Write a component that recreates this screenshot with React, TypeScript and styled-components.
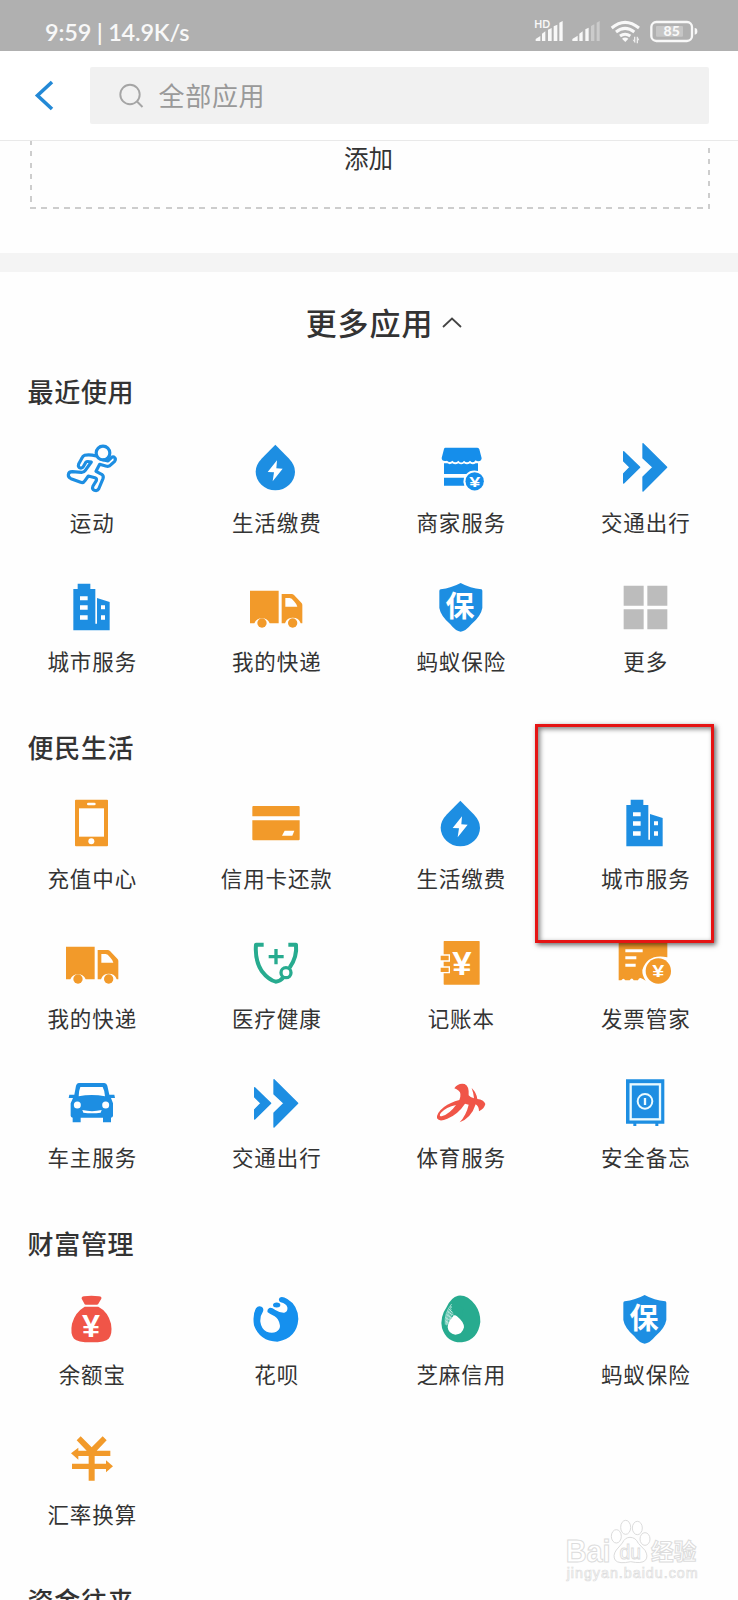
import React from "react";
import styled, { createGlobalStyle } from "styled-components";

const BLUE = "#1d8ee2";
const ORANGE = "#f29a2a";
const GREEN = "#27ab8f";
const RED = "#f05548";
const CJK = '"Noto Sans CJK SC", "Noto Sans", sans-serif';

const GlobalStyle = createGlobalStyle`
  * { box-sizing: border-box; }
  html, body { margin: 0; padding: 0; background: #fefefe; }
  body { font-family: ${CJK}; color: #333; overflow: hidden; }
`;

const Screen = styled.div`
  position: relative;
  width: 738px;
  height: 1600px;
  overflow: hidden;
  background: #fefefe;
`;

const StatusBar = styled.div`
  height: 51px;
  padding: 13px 36px 0 45px;
  background: #b0b0b0;
  display: flex;
  justify-content: space-between;
  align-items: center;
`;

const Clock = styled.span`
  font-family: Lato, "Noto Sans", sans-serif;
  font-weight: 600;
  font-size: 23.5px;
  line-height: 36px;
  letter-spacing: -0.2px;
  color: #f8f8f8;
  white-space: pre;
`;

const Header = styled.header`
  height: 90px;
  border-bottom: 1px solid #e9e9e9;
  background: #fff;
  display: flex;
  align-items: center;
  padding: 0 29px 0 34px;
`;

const BackButton = styled.button`
  width: 56px;
  height: 56px;
  padding: 0;
  border: 0;
  background: none;
  text-align: left;
  svg { display: block; }
`;

const SearchBox = styled.div`
  flex: 1;
  height: 57px;
  border-radius: 2px;
  background: #f1f1f1;
  display: flex;
  align-items: center;
  padding-left: 29px;
  gap: 14px;
`;

const Placeholder = styled.span`
  margin: -2px 0 0 -0.5px;
  font-size: 26px;
  line-height: 36px;
  letter-spacing: 0.7px;
  color: #999;
`;

const AddArea = styled.div`
  height: 112px;
  padding: 0 28.5px 0 29.5px;
`;

const AddBox = styled.div`
  height: 68px;
  display: flex;
  justify-content: center;
  padding-right: 2px;
  font-size: 24.5px;
  line-height: 34px;
  background:
    repeating-linear-gradient(90deg, #cdcdcd 0 6px, transparent 6px 11.3px) left bottom / 100% 2px no-repeat,
    repeating-linear-gradient(180deg, #cdcdcd 0 5px, transparent 5px 11.3px) left -1px / 2px 100% no-repeat,
    repeating-linear-gradient(0deg, #cdcdcd 0 5px, transparent 5px 11.3px) right top / 2px 100% no-repeat;
`;

const Divider = styled.div`
  height: 19px;
  background: #f4f4f4;
`;

const MoreTitle = styled.h1`
  margin: 0;
  height: 100px;
  padding: 26px 0 0 30px;
  display: flex;
  justify-content: center;
  align-items: flex-start;
  gap: 9px;
  font-size: 31px;
  line-height: 48px;
  font-weight: 500;
  letter-spacing: 0.9px;
  svg { display: block; margin-top: 18px; }
`;

const Section = styled.section`
  padding-bottom: 22.2px;
`;

const SectionTitle = styled.h2`
  margin: 0 0 16px;
  padding-left: 27.5px;
  height: 39px;
  line-height: 38px;
  font-size: 26px;
  font-weight: 500;
  letter-spacing: 0.7px;
`;

const Grid = styled.div`
  display: grid;
  grid-template-columns: repeat(4, 1fr);
  grid-auto-rows: 139.6px;
`;

const Cell = styled.div`
  display: flex;
  flex-direction: column;
  align-items: center;
  padding-top: 10px;
`;

const Glyph = styled.svg`
  display: block;
  width: 60px;
  height: 60px;
  margin-right: 1px;
`;

const Label = styled.span`
  margin: 8.6px 0 0;
  font-size: 21.5px;
  line-height: 32px;
  letter-spacing: 0.9px;
  white-space: nowrap;
`;

const Highlight = styled.div`
  position: absolute;
  left: 535px;
  top: 724px;
  width: 179px;
  height: 219px;
  border: 3px solid #e51414;
  box-shadow: 2px 2px 5px rgba(0, 0, 0, 0.6), inset 2px 2px 5px rgba(0, 0, 0, 0.5);
`;

const Watermark = styled.svg`
  position: absolute;
  left: 559px;
  top: 1513px;
  width: 147px;
  height: 77px;
`;

const Yen = ({ x, y, size, width }: { x: number; y: number; size: number; width: number }) => (
  <text
    x={x - width / 2}
    y={y}
    fill="#fff"
    stroke="none"
    fontFamily="Liberation Sans, sans-serif"
    fontWeight="700"
    fontSize={size}
    textLength={width}
    lengthAdjust="spacingAndGlyphs"
  >
    ¥
  </text>
);

const Run = () => (
  <Glyph viewBox="187 441 180 180" fill="none" stroke={BLUE} strokeWidth="9.5" strokeLinejoin="round" strokeLinecap="round">
    <circle cx="310" cy="489" r="20.5" />
    <path d="M290 498 Q268 492 255 496 Q249 498 247 504 L237 522 Q234 532 242 534 Q249 535 252 528 L259 516 Q262 513 275 516 L257 541 Q253 547 246 547 L218 545 Q207 545 206 554 Q205 562 214 566 L243 577 Q251 580 256 572 L266 558 L286 563 Q292 565 290 572 L280 588 Q276 598 284 601 Q293 604 297 597 L310 566 Q313 558 306 553 L289 544 L300 523 L318 528 Q329 531 334 524 L345 514 Q350 505 343 501 Q337 499 333 505 L325 513 L312 510" />
  </Glyph>
);

const Utility = () => (
  <Glyph viewBox="740 441 180 180">
    <path fill={BLUE} d="M828 464 L868 505 Q887 525 887 545 A59 56 0 0 1 769 545 Q769 525 788 505Z" />
    <path fill="#fff" d="M833 511 L805 546 L824 547 L820 574 L850 536 L831 535Z" />
  </Glyph>
);

const Shop = () => (
  <Glyph viewBox="187 441 180 180" fill="#158eeb">
    <path d="M230 473 H326 Q331 473 332 478 L339 505 Q338 514 329 514 Q324 514 321 511 Q313 522 304 512 Q295 522 286 512 Q278 523 269 512 Q260 522 251 512 Q243 520 235 512 Q219 515 219 504 L226 477 Q227 473 230 473Z" />
    <path d="M226 520 H236 Q243 525 251 520 Q260 526 269 520 Q278 526 286 520 Q295 526 304 520 Q313 526 321 520 H328 V543 Q306 538 293 552 H226Z M226 563 H286 Q282 575 287 587 H226Z" />
    <circle cx="318" cy="574" r="27.5" />
    <Yen x={318} y={590} size={46} width={33} />
  </Glyph>
);

const Travel = () => (
  <Glyph viewBox="740 441 180 180" fill={BLUE} stroke={BLUE} strokeWidth="4" strokeLinejoin="round">
    <path d="M766 485 L814 532 L766 579 V551 L785 532 L766 513Z M824 461 L895 532 L824 603 V561 L854 532 L824 504Z" />
  </Glyph>
);

const City = () => (
  <Glyph viewBox="187 49 180 180">
    <path fill={BLUE} fillRule="evenodd" d="M221 85 H234 V69 H272 V85 H287 V189 H292 V112 L330 124 V209 H221Z M241 107 V119 H264 V107Z M241 134 V147 H264 V134Z M241 164 V177 H264 V164Z M304 134 V146 H316 V134Z M304 164 V177 H316 V164Z" />
  </Glyph>
);

const Truck = () => (
  <Glyph viewBox="740 50 180 180" fill={ORANGE}>
    <path d="M752 91 H838 V189 H811 A25 25 0 0 0 765 189 H752Z" />
    <path fillRule="evenodd" d="M847 101 H877 Q881 101 884 104 L906 127 Q909 130 909 134 V189 H904 A25 25 0 0 0 857 189 H847Z M858 113 V139 H894 Q891 130 884 123 Q877 113 871 113Z" />
    <circle cx="788" cy="188" r="14" />
    <circle cx="880" cy="188" r="14" />
  </Glyph>
);

const Shield = () => (
  <Glyph viewBox="187 50 180 180">
    <path fill={BLUE} d="M276 68 Q305 84 338 87 Q341 88 341 92 V143 Q337 167 308 192 Q290 214 276 214 Q262 214 245 192 Q216 167 212 143 V92 Q212 88 216 87 Q248 83 276 68Z" />
    <text x="274" y="169" fill="#fff" textAnchor="middle" fontFamily={CJK} fontWeight="700" fontSize="87">保</text>
  </Glyph>
);

const More = () => (
  <Glyph viewBox="740 50 180 180" fill="#bcbcbc">
    <path d="M766 76 H826 V136 H766Z M837 76 H897 V136 H837Z M766 147 H826 V207 H766Z M837 147 H897 V207 H837Z" />
  </Glyph>
);

const Phone = () => (
  <Glyph viewBox="187 40 180 180">
    <rect x="226" y="60" width="99" height="140" rx="3" fill={ORANGE} />
    <g fill="#fff">
      <rect x="238" y="86" width="75" height="85" />
      <rect x="262" y="69" width="26" height="8" rx="4" />
      <circle cx="275" cy="185" r="9" />
    </g>
  </Glyph>
);

const Card = () => (
  <Glyph viewBox="740 40 180 180">
    <path fill={ORANGE} d="M762 79 H898 Q901 79 901 82 V110 H759 V82 Q759 79 762 79Z M759 122 H901 V179 Q901 182 898 182 H762 Q759 182 759 179Z" />
    <path fill="#fff" d="M856 153 H885 L879 168 H848Z" />
  </Glyph>
);

const Health = () => (
  <Glyph viewBox="740 459 180 180" fill="none" stroke={GREEN} strokeWidth="12">
    <path d="M793 494 H770 Q766 540 787 573 Q808 600 829 605 Q844 603 852 592" strokeLinejoin="round" />
    <path d="M867 494 H890 Q894 529 871 563" strokeLinejoin="round" />
    <circle cx="860" cy="578" r="15" strokeWidth="10" />
    <path d="M808 530 H853 M830 507 V553" strokeWidth="10" />
  </Glyph>
);

const Ledger = () => (
  <Glyph viewBox="187 459 180 180">
    <rect x="225" y="483" width="108" height="131" rx="2" fill={ORANGE} />
    <path fill={ORANGE} stroke="#fff" strokeWidth="4" d="M214 525 H242 V543 H214Z M214 561 H242 V578 H214Z" />
    <Yen x={280} y={584} size={98} width={58} />
  </Glyph>
);

const Invoice = () => (
  <Glyph viewBox="740 459 180 180">
    <path fill={ORANGE} d="M751 480 H897 V532 Q838 520 822 570 Q821 586 832 602 Q825 598 817 594 Q811 594 809 601 H796 Q791 590 784 601 H771 Q765 592 759 601 H751Z" />
    <path stroke="#fff" strokeWidth="9" d="M771 512 H823 M771 533 H804 M771 556 H802" />
    <circle cx="870" cy="573" r="38" fill={ORANGE} />
    <Yen x={870} y={590} size={49} width={36} />
  </Glyph>
);

const Car = () => (
  <Glyph viewBox="187 38 180 180">
    <path fill={BLUE} d="M237 68 H314 Q321 68 323 76 L329 103 H344 L346 113 H334 L340 129 V166 Q340 171 334 172 V186 H310 V172 H243 V186 H219 V172 Q213 171 213 166 V129 L220 113 H207 L209 103 H224 L229 76 Q231 68 237 68Z" />
    <path fill="#fff" d="M242 80 H309 Q316 93 316 108 Q276 100 237 108 Q237 92 242 80Z M248 149 Q277 156 306 149 L303 157 Q277 161 251 157Z" />
    <circle cx="233" cy="134" r="10.5" fill="#fff" />
    <circle cx="318" cy="134" r="10.5" fill="#fff" />
  </Glyph>
);

const Sports = () => (
  <Glyph viewBox="187 38 180 180" fill={RED}>
    <path fillRule="evenodd" d="M257 84 Q268 67 288 71 Q302 77 300 105 Q304 111 316 114 Q315 99 309 83 Q324 98 326 116 Q345 117 350 131 Q347 145 331 153 Q331 138 321 132 Q308 173 273 186 Q293 164 300 133 L289 130 Q268 162 236 175 Q212 186 205 174 Q203 158 226 140 Q245 126 272 119 Q280 99 270 91 Q264 86 257 84Z M262 134 Q232 141 217 157 Q209 168 219 168 Q242 162 262 134Z" />
  </Glyph>
);

const Safe = () => (
  <Glyph viewBox="740 38 180 180" fill="none">
    <path fill={BLUE} d="M773 57 H888 V190 H870 V197 H861 V190 H804 V197 H795 V190 H773Z" />
    <rect x="787" y="72" width="88" height="105" stroke="#e9faff" strokeWidth="7" />
    <circle cx="830" cy="123" r="22" stroke="#e9faff" strokeWidth="6" />
    <path d="M830 113 V134" stroke="#e9faff" strokeWidth="7" />
  </Glyph>
);

const MoneyBag = () => (
  <Glyph viewBox="187 28 180 180" fill={RED}>
    <path d="M253 50 Q275 46 298 50 Q307 51 305 57 L297 71 Q296 75 292 75 H258 Q254 75 253 70 L246 57 Q245 51 253 50Z" />
    <path d="M255 81 H296 Q325 96 334 132 Q339 163 327 177 Q318 188 275 188 Q233 188 223 177 Q211 162 217 132 Q226 98 255 81Z" />
    <Yen x={274} y={173} size={94} width={54} />
  </Glyph>
);

const Huabei = () => (
  <Glyph viewBox="740 28 180 180" fill="#1590ee">
    <path d="M770 86 Q777 76 788 82 Q795 87 790 98 Q782 109 783 126 Q786 148 802 156 Q818 162 831 156 Q845 148 841 134 Q838 118 826 110 Q813 104 805 98 Q802 90 810 85 Q817 83 828 91 Q842 100 855 99 Q866 96 864 83 Q861 72 844 68 Q835 62 841 54 Q849 49 864 58 Q896 77 897 118 Q893 176 834 186 Q781 185 764 137 Q759 105 770 86Z" />
    <ellipse cx="832" cy="76" rx="11" ry="7.5" />
  </Glyph>
);

const Sesame = () => (
  <Glyph viewBox="187 28 180 180">
    <path fill={GREEN} d="M268 48 Q296 44 320 76 Q336 99 335 127 Q328 181 280 188 Q234 190 220 145 Q213 112 234 82 Q248 52 268 48Z" />
    <g fill="none" stroke="#d7f2eb" strokeWidth="2">
      <path d="M249 73 Q226 100 230 135 M249 80 Q229 105 234 137 M248 88 Q234 108 237 135 M249 94 Q239 108 241 129 M251 101 Q243 112 245 124" />
      <path d="M245 80 L250 86 M240 88 L254 100 M236 96 L257 108 M233 105 L252 116 M231 114 L246 123 M230 123 L241 131" />
    </g>
    <path fill="#fff" d="M252 111 Q258 103 265 110 Q286 127 286 143 Q281 165 260 165 Q239 162 237 143 Q237 129 252 111Z" />
    <path fill={GREEN} d="M254 67 Q243 86 256 101 L279 118 L284 85Z" />
  </Glyph>
);

const Exchange = () => (
  <Glyph viewBox="187 447 180 180" fill={ORANGE}>
    <path d="M231 481 L243 469 L276 502 L309 469 L321 481 L291 512 H332 V528 H285 V551 H319 V541 L340 559 L319 577 V567 H285 V602 H267 V567 H217 V551 H267 V528 H236 V539 L214 520 L236 503 V512 H261Z" />
  </Glyph>
);

type App = [string, React.ComponentType];

const sections: { title: string; apps: App[] }[] = [
  {
    title: "最近使用",
    apps: [
      ["运动", Run],
      ["生活缴费", Utility],
      ["商家服务", Shop],
      ["交通出行", Travel],
      ["城市服务", City],
      ["我的快递", Truck],
      ["蚂蚁保险", Shield],
      ["更多", More],
    ],
  },
  {
    title: "便民生活",
    apps: [
      ["充值中心", Phone],
      ["信用卡还款", Card],
      ["生活缴费", Utility],
      ["城市服务", City],
      ["我的快递", Truck],
      ["医疗健康", Health],
      ["记账本", Ledger],
      ["发票管家", Invoice],
      ["车主服务", Car],
      ["交通出行", Travel],
      ["体育服务", Sports],
      ["安全备忘", Safe],
    ],
  },
  {
    title: "财富管理",
    apps: [
      ["余额宝", MoneyBag],
      ["花呗", Huabei],
      ["芝麻信用", Sesame],
      ["蚂蚁保险", Shield],
      ["汇率换算", Exchange],
    ],
  },
  { title: "资金往来", apps: [] },
];

const StatusIcons = () => (
  <svg width="170" height="34" viewBox="490 48 510 102" fill="#f8f8f8">
    <text x="497" y="86" fontFamily="Lato, sans-serif" fontWeight="700" fontSize="31">HD</text>
    <path d="M501 126 V120 L515 111 V126Z M520 126 V104 L530 97 V126Z M538 126 V92 L549 87 V126Z M555 126 V82 L566 77 V126Z M572 126 V71 L582 66 V126Z" />
    <path d="M611 126 V120 L627 110 V126Z M632 126 V104 L642 97 V126Z M650 126 V91 L660 86 V126Z" />
    <path opacity=".38" d="M667 126 V81 L677 76 V126Z M684 126 V71 L693 66 V126Z" />
    <g fill="none" stroke="#f8f8f8" strokeWidth="9">
      <path d="M729 87 Q769 53 811 87 M742 99 Q769 77 797 99 M754 111 Q769 100 785 111" />
    </g>
    <path d="M760 119 Q769 112 779 119 L770 129Z" />
    <path d="M798 131 L792 122 H796 V113 H800 V131Z M804 113 V133 H808 V124 H812 L807 113Z" opacity=".85" />
    <rect x="848" y="69" width="122" height="57" rx="15" fill="none" stroke="#f8f8f8" strokeWidth="7" />
    <rect x="862" y="81" width="81" height="32" rx="3" opacity=".3" />
    <text x="909" y="112" textAnchor="middle" fontFamily="Lato, sans-serif" fontWeight="900" fontSize="42">85</text>
    <path d="M978 87 Q986 87 986 97 Q986 107 978 107Z" />
  </svg>
);

export default function App() {
  return (
    <Screen>
      <GlobalStyle />
      <StatusBar>
        <Clock>9:59 | 14.9K/s</Clock>
        <StatusIcons />
      </StatusBar>
      <Header>
        <BackButton aria-label="返回">
          <svg width="22" height="56" viewBox="0 0 22 56" fill="none" stroke="#2389d6" strokeWidth="3.6">
            <path d="M18 14 L3.5 27.5 L18 41" />
          </svg>
        </BackButton>
        <SearchBox>
          <svg width="26" height="26" viewBox="0 0 26 26" fill="none" stroke="#a5a5a5" strokeWidth="1.9">
            <circle cx="11" cy="11.5" r="9.7" />
            <path d="M18 18.5 L23.5 24" />
          </svg>
          <Placeholder>全部应用</Placeholder>
        </SearchBox>
      </Header>
      <AddArea>
        <AddBox>添加</AddBox>
      </AddArea>
      <Divider />
      <MoreTitle>
        更多应用
        <svg width="20" height="14" viewBox="0 0 20 14" fill="none" stroke="#444" strokeWidth="1.8">
          <path d="M1 11 L10 2.5 L19 11" />
        </svg>
      </MoreTitle>
      {sections.map(({ title, apps }) => (
        <Section key={title}>
          <SectionTitle>{title}</SectionTitle>
          <Grid>
            {apps.map(([name, Icon]) => (
              <Cell key={name}>
                <Icon />
                <Label>{name}</Label>
              </Cell>
            ))}
          </Grid>
        </Section>
      ))}
      <Highlight />
      <Watermark viewBox="570 699 441 231" fill="#fff" stroke="#dcdcdc" strokeWidth="3">
        <text x="590" y="846" fontFamily="Liberation Sans, sans-serif" fontWeight="700" fontSize="92" textLength="135" lengthAdjust="spacingAndGlyphs">Bai</text>
        <ellipse cx="742" cy="769" rx="15" ry="20" />
        <ellipse cx="770" cy="742" rx="15" ry="21" />
        <ellipse cx="805" cy="744" rx="15" ry="20" />
        <ellipse cx="828" cy="777" rx="15" ry="19" />
        <path d="M783 772 Q800 772 808 790 L828 811 Q839 829 829 841 Q818 852 785 845 Q750 853 739 841 Q730 827 742 810 L760 789 Q768 772 783 772Z" />
        <text x="784" y="838" textAnchor="middle" fontFamily="Liberation Sans, sans-serif" fontSize="58" strokeWidth="2.5">du</text>
        <text x="846" y="839" fontFamily={CJK} fontWeight="700" fontSize="68">经验</text>
        <text x="593" y="895" fontFamily="Liberation Sans, sans-serif" fontSize="43" strokeWidth="2" textLength="393">jingyan.baidu.com</text>
      </Watermark>
    </Screen>
  );
}
